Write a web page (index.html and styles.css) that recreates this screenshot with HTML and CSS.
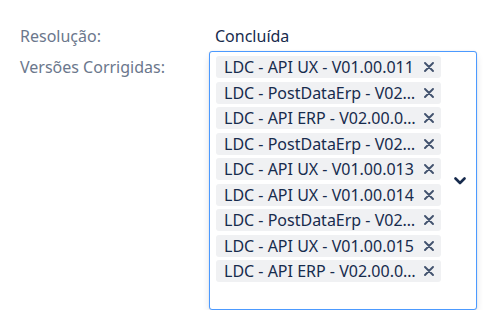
FILE: index.html
```html
<!DOCTYPE html>
<html lang="pt-BR">
<head>
    <meta charset="UTF-8">
    <meta name="viewport" content="width=device-width, initial-scale=1.0">
    <title>Versões Corrigidas</title>
    <link rel="stylesheet" href="styles.css">
</head>
<body>
    <div class="fields">
        <div class="label">Resolução:</div>
        <div class="value">Concluída</div>

        <div class="label label-multi">Versões Corrigidas:</div>
        <div class="editor">
            <div class="select">
                <div class="tags">
                    <span class="tag"><span class="tag-text">LDC - API UX - V01.00.011</span><svg class="tag-x" viewBox="0 0 10 10"><path d="M1 1 L9 9 M9 1 L1 9"/></svg></span>
                    <span class="tag"><span class="tag-text">LDC - PostDataErp - V02.00.005</span><svg class="tag-x" viewBox="0 0 10 10"><path d="M1 1 L9 9 M9 1 L1 9"/></svg></span>
                    <span class="tag"><span class="tag-text">LDC - API ERP - V02.00.010</span><svg class="tag-x" viewBox="0 0 10 10"><path d="M1 1 L9 9 M9 1 L1 9"/></svg></span>
                    <span class="tag"><span class="tag-text">LDC - PostDataErp - V02.00.006</span><svg class="tag-x" viewBox="0 0 10 10"><path d="M1 1 L9 9 M9 1 L1 9"/></svg></span>
                    <span class="tag"><span class="tag-text">LDC - API UX - V01.00.013</span><svg class="tag-x" viewBox="0 0 10 10"><path d="M1 1 L9 9 M9 1 L1 9"/></svg></span>
                    <span class="tag"><span class="tag-text">LDC - API UX - V01.00.014</span><svg class="tag-x" viewBox="0 0 10 10"><path d="M1 1 L9 9 M9 1 L1 9"/></svg></span>
                    <span class="tag"><span class="tag-text">LDC - PostDataErp - V02.00.007</span><svg class="tag-x" viewBox="0 0 10 10"><path d="M1 1 L9 9 M9 1 L1 9"/></svg></span>
                    <span class="tag"><span class="tag-text">LDC - API UX - V01.00.015</span><svg class="tag-x" viewBox="0 0 10 10"><path d="M1 1 L9 9 M9 1 L1 9"/></svg></span>
                    <span class="tag"><span class="tag-text">LDC - API ERP - V02.00.011</span><svg class="tag-x" viewBox="0 0 10 10"><path d="M1 1 L9 9 M9 1 L1 9"/></svg></span>
                </div>
                <div class="chevron">
                    <svg width="12" height="8" viewBox="0 0 12 8"><path d="M1.5 1.5 L6 6 L10.5 1.5" fill="none" stroke="#172b4d" stroke-width="2.6" stroke-linecap="round" stroke-linejoin="round"/></svg>
                </div>
            </div>
            <div class="actions">
                <button class="action"></button>
                <button class="action"></button>
            </div>
        </div>
    </div>
</body>
</html>
```

FILE: styles.css
```css
html, body {
    overflow: hidden;
}

body {
    margin: 0;
    font-family: "Noto Sans", "Open Sans", sans-serif;
    font-size: 16px;
    color: #172b4d;
    background: #fff;
}

.fields {
    display: grid;
    grid-template-columns: 189px 268px;
    row-gap: 4px;
    padding: 25px 0 0 20px;
}

.label {
    color: #6b778c;
    line-height: 22px;
}

.label-multi {
    padding-top: 5px;
}

.value {
    padding-left: 6px;
    line-height: 22px;
}

.editor {
    position: relative;
}

.select {
    display: flex;
    align-items: center;
    height: 259px;
    box-sizing: border-box;
    border: 1px solid #4c9aff;
    border-radius: 3px;
    background: #fff;
    box-shadow: 0 4px 8px -2px rgba(9, 30, 66, 0.2), 0 0 1px rgba(9, 30, 66, 0.2);
}

.tags {
    align-self: flex-start;
    display: flex;
    flex-direction: column;
    gap: 3.5px;
    padding: 4px 0 0 6px;
    flex: 1;
}

.tag {
    display: flex;
    align-items: center;
    width: 225px;
    height: 22px;
    box-sizing: border-box;
    padding: 0 7px 0 8px;
    background: #f0f1f3;
    border-radius: 3px;
}

.tag-text {
    width: 192px;
    margin-right: 8px;
    overflow: hidden;
    white-space: nowrap;
    text-overflow: ellipsis;
    line-height: 22px;
}

.tag-x {
    width: 10px;
    height: 10px;
    fill: none;
    stroke: #42526e;
    stroke-width: 1.9;
    stroke-linecap: round;
}

.chevron {
    width: 14px;
    margin-right: 9px;
    display: flex;
    justify-content: center;
}

.actions {
    position: absolute;
    right: 6px;
    top: 262px;
    display: flex;
    gap: 7px;
}

.action {
    width: 30px;
    height: 30px;
    border: none;
    border-radius: 3px;
    background: #f4f5f7;
    box-shadow: 0 4px 8px -2px rgba(9, 30, 66, 0.25), 0 0 1px rgba(9, 30, 66, 0.31);
}
```
